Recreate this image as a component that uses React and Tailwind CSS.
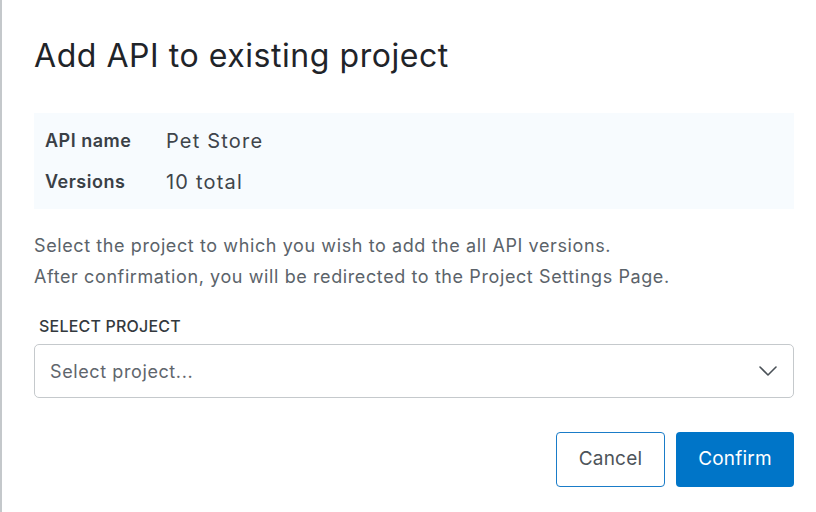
const details = [
  { label: 'API name', value: 'Pet Store' },
  { label: 'Versions', value: '10 total' },
]

function Chevron() {
  return (
    <svg width="18" height="10" viewBox="0 0 18 10" fill="none" className="text-[#4a5157]">
      <polyline points="1,1 9,9 17,1" stroke="currentColor" strokeWidth="1.6" strokeLinecap="round" strokeLinejoin="round" />
    </svg>
  )
}

export default function App() {
  return (
    <div
      className="h-[512px] w-[816px] border-l-2 border-[#c4c8cb] bg-white pl-[32px] pt-[36px] text-[#2b3136]"
      style={{ fontFamily: 'Inter, "Noto Sans", sans-serif' }}
    >
      <div className="w-[760px]">
        <h1 className="text-[32px] leading-[40px] font-normal tracking-[0.55px] text-[#1f2429]">
          Add API to existing project
        </h1>

        <dl className="mt-[37px] bg-[#f7fbfe] px-[11px] py-[7px]">
          {details.map((row) => (
            <div key={row.label} className="flex h-[41px] items-center">
              <dt className="w-[121px] text-[18px] font-semibold tracking-[0.5px] text-[#3a4046]">
                {row.label}
              </dt>
              <dd className="text-[20px] tracking-[1.2px] text-[#3f454b]">{row.value}</dd>
            </div>
          ))}
        </dl>

        <p className="mt-[21px] text-[18px] leading-[31px] tracking-[0.6px] text-[#5b636a]">
          Select the project to which you wish to add the all API versions.
          <br />
          After confirmation, you will be redirected to the Project Settings Page.
        </p>

        <label className="mt-[24px] block pl-[5px] text-[16px] leading-[20px] font-medium tracking-[0.2px] text-[#33393e]">
          SELECT PROJECT
        </label>

        <button
          type="button"
          className="mt-[8px] flex h-[54px] w-full items-center justify-between rounded-[5px] border border-[#c5c9cc] bg-white pl-[15px] pr-[16px] text-left text-[18px] tracking-[0.6px] text-[#5f666d]"
        >
          <span>Select project...</span>
          <Chevron />
        </button>

        <div className="mt-[34px] flex justify-end gap-[11px]">
          <button
            type="button"
            className="h-[55px] w-[109px] rounded-[4px] border border-[#1a7cc8] bg-white text-[19px] tracking-[0.2px] text-[#4d545a]"
          >
            Cancel
          </button>
          <button
            type="button"
            className="h-[55px] w-[118px] rounded-[4px] bg-[#0075c8] text-[19px] tracking-[0.2px] text-white"
          >
            Confirm
          </button>
        </div>
      </div>
    </div>
  )
}
